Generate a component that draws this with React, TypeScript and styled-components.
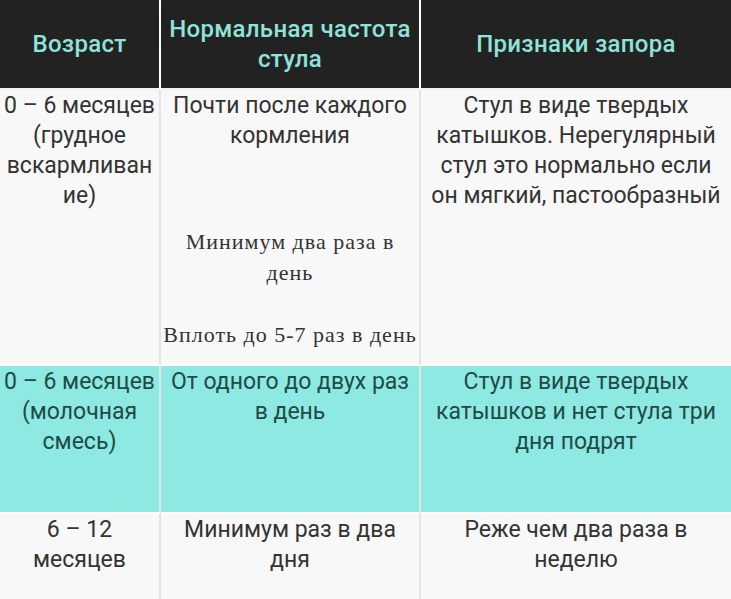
import React from "react";
import styled, { createGlobalStyle } from "styled-components";

const GlobalStyle = createGlobalStyle`
  html, body {
    margin: 0;
    padding: 0;
    background: #ffffff;
  }
  body {
    font-family: Roboto, "Noto Sans", Arial, sans-serif;
    overflow: hidden;
  }
`;

const Table = styled.table`
  width: 731px;
  border-collapse: separate;
  border-spacing: 0;
  table-layout: fixed;
`;

const HeadCell = styled.th<{ $last?: boolean }>`
  height: 88px;
  padding: 0 1px;
  background: #222222;
  color: #8fe3d9;
  font-size: 24px;
  font-weight: 500;
  letter-spacing: 0.3px;
  line-height: 30px;
  text-align: center;
  vertical-align: middle;
  border-right: ${(p) => (p.$last ? "none" : "2px solid #ffffff")};
  border-bottom: 2px solid #f2f2f2;
`;

const Row = styled.tr<{ $accent?: boolean; $height: number }>`
  height: ${(p) => p.$height}px;
  background: ${(p) => (p.$accent ? "#8de9e1" : "#f8f8f8")};
  color: ${(p) => (p.$accent ? "#1f4b47" : "#333333")};
`;

// last column has a bit more side padding so its lines wrap like the original
const Cell = styled.td<{ $last?: boolean }>`
  padding: ${(p) => (p.$last ? "1px 6px 0" : "1px 1px 0")};
  font-size: 23px;
  line-height: 30px;
  text-align: center;
  vertical-align: top;
  border-right: ${(p) => (p.$last ? "none" : "2px solid #e4e4e4")};
  border-bottom: 2px solid #ffffff;
`;

const SerifNote = styled.p<{ $gap: number }>`
  margin: ${(p) => p.$gap}px 0 0;
  font-family: "Liberation Serif", "Times New Roman", serif;
  font-size: 22px;
  letter-spacing: 1px;
  line-height: 31px;
  color: #333333;
`;

export default function App() {
  return (
    <>
      <GlobalStyle />
      <Table>
        <colgroup>
          <col style={{ width: 161 }} />
          <col style={{ width: 260 }} />
          <col />
        </colgroup>
        <thead>
          <tr>
            <HeadCell>Возраст</HeadCell>
            <HeadCell>Нормальная частота стула</HeadCell>
            <HeadCell $last>Признаки запора</HeadCell>
          </tr>
        </thead>
        <tbody>
          <Row $height={276}>
            <Cell>
              0 – 6 месяцев (грудное вскармливан<br />ие)
            </Cell>
            <Cell>
              Почти после каждого кормления
              <SerifNote $gap={75}>Минимум два раза в день</SerifNote>
              <SerifNote $gap={31}>Вплоть до 5-7 раз в день</SerifNote>
            </Cell>
            <Cell $last>
              Стул в виде твердых катышков. Нерегулярный стул это нормально
              если он мягкий, пастообразный
            </Cell>
          </Row>
          <Row $accent $height={148}>
            <Cell>0 – 6 месяцев (молочная смесь)</Cell>
            <Cell>От одного до двух раз в день</Cell>
            <Cell $last>
              Стул в виде твердых катышков и нет стула три дня подрят
            </Cell>
          </Row>
          <Row $height={100}>
            <Cell>6 – 12 месяцев</Cell>
            <Cell>Минимум раз в два дня</Cell>
            <Cell $last>Реже чем два раза в неделю</Cell>
          </Row>
        </tbody>
      </Table>
    </>
  );
}
